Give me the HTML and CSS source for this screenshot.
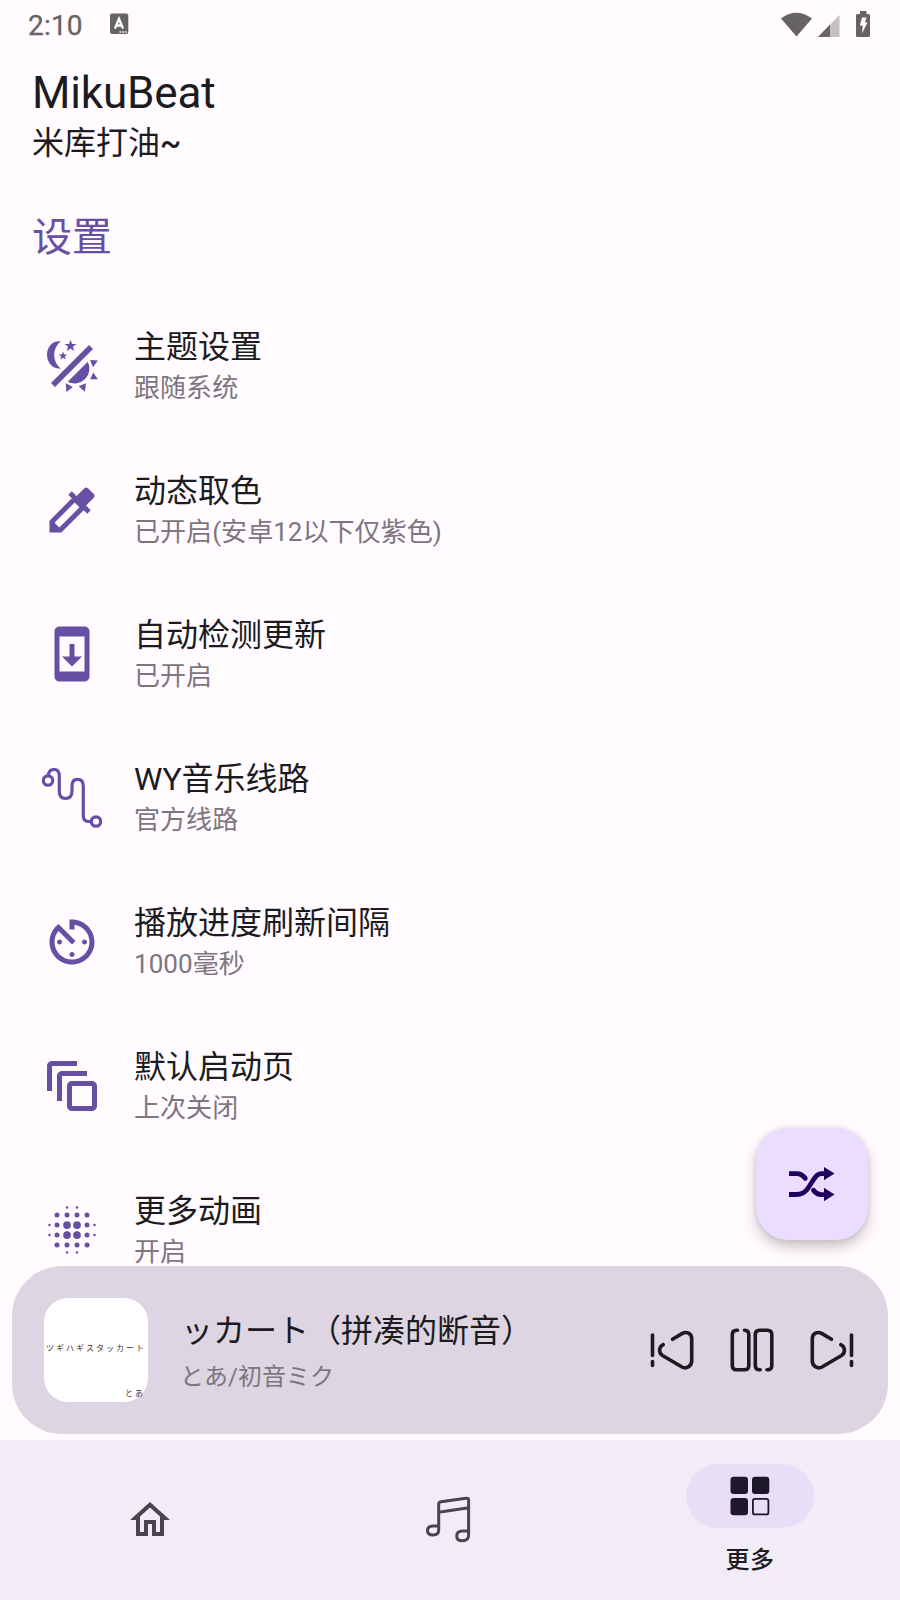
FILE: index.html
```html
<!DOCTYPE html>
<html lang="zh-CN">
<head>
<meta charset="utf-8">
<title>MikuBeat</title>
<link rel="stylesheet" href="styles.css">
</head>
<body>
<div class="app">
  <div class="status">
    <span class="clock">2:10</span>
    <svg class="ime" width="20" height="22" viewBox="109 13 20 22"><rect x="110" y="13.5" width="18.3" height="20.5" rx="2" fill="#656366"/><path d="M115 28.5L119 18.800L123 28.500M116.500 25.500h5" fill="none" stroke="#fff" stroke-width="2.300"/><path d="M119.500 32h7" stroke="#fff" stroke-width="1.500" stroke-dasharray="1.700 1"/></svg>
    <svg class="signals" width="92" height="28" viewBox="780 9 92 28">
      <path d="M781 17.500Q796 6 812 17.500L796.500 35.500z" fill="#656366"/>
      <path d="M839.500 14V36H818z" fill="#c2c0c2"/><path d="M830 23.500V36H818z" fill="#656366"/>
      <path d="M860 10h6.500v3H868.500a1.500 1.500 0 0 1 1.500 1.500V34.500a1.500 1.500 0 0 1-1.500 1.500h-11a1.500 1.500 0 0 1-1.500-1.500v-20a1.500 1.500 0 0 1 1.500-1.500H860z" fill="#656366"/>
      <path d="M862 16.500h4.500l-1.500 5h2.500l-5.500 11 .8-8h-3z" fill="#fff"/>
    </svg>
  </div>
  <header class="header">
    <h1 class="title">MikuBeat</h1>
    <p class="slogan">米库打油<span class="tilde">~</span></p>
  </header>
  <h2 class="section">设置</h2>
  <ul class="list">
    <li class="item">
      <svg class="icon" viewBox="42 336 60 60">
        <path d="M61 341.300C53 340 47 346.500 47 354.500C47 363 53 369.500 61 368.500C52 362 52 348 61 341.300z"/>
        <path d="M70.500 339.700l1.500 4.200h4.500l-3.500 2.700 1.200 4.400-3.700-2.600-3.700 2.600 1.200-4.400-3.500-2.700h4.500zM63 351.400l1.100 3h3.200l-2.500 2 .9 3.200-2.700-1.900-2.700 1.900.9-3.200-2.500-2h3.200z"/>
        <path d="M53 385L91 347" fill="none" stroke="#6750a4" stroke-width="5.600"/>
        <path d="M87.800 361.700A14.900 14.900 0 0 1 67.700 381.800z"/>
        <path d="M90.200 360l7.700.5-5 6.800zM93.200 372.400l4.700 6.800h-7.700zM78.700 386.200l7.200-2.900-1 8.500zM65.800 383.300l7 3.600-6.400 5z"/>
      </svg>
      <div class="label"><span class="name">主题设置</span><span class="value">跟随系统</span></div>
    </li>
    <li class="item">
      <svg class="icon" viewBox="0 0 24 24"><path d="M20.710 5.630l-2.340-2.340c-.39-.39-1.020-.39-1.410 0l-3.120 3.120-1.930-1.910-1.410 1.410 1.420 1.420L3 16.250V21h4.750l8.920-8.920 1.420 1.420 1.410-1.410-1.920-1.920 3.120-3.120c.4-.4.4-1.030.01-1.420zM6.920 19L5 17.080l8.060-8.060 1.920 1.920L6.920 19z"/></svg>
      <div class="label"><span class="name">动态取色</span><span class="value">已开启(安卓12以下仅紫色)</span></div>
    </li>
    <li class="item">
      <svg class="icon" viewBox="0 0 24 24"><path d="M17 1.010L7 1c-1.100 0-2 .9-2 2v18c0 1.100.9 2 2 2h10c1.100 0 2-.9 2-2V3c0-1.100-.9-1.990-2-1.990zM17 19H7V5h10v14zm-1-6h-3V8h-2v5H8l4 4 4-4z"/></svg>
      <div class="label"><span class="name">自动检测更新</span><span class="value">已开启</span></div>
    </li>
    <li class="item">
      <svg class="icon outline" viewBox="42 768 60 60">
        <circle cx="48" cy="780.500" r="4.700"/><circle cx="96" cy="821.500" r="4.700"/>
        <path d="M48 776Q49 769.500 54 769.500Q59.300 769.500 59.300 776V791Q59.300 798.500 65.500 798.500Q72 798.500 72 791V786Q72 779.300 77.500 779.300Q83.300 779.300 83.300 786V816Q83.300 821.500 89 821.500H91.300"/>
      </svg>
      <div class="label"><span class="name">WY音乐线路</span><span class="value">官方线路</span></div>
    </li>
    <li class="item">
      <svg class="icon" viewBox="0 0 24 24"><path d="M11 17c0 .55.45 1 1 1s1-.45 1-1-.45-1-1-1-1 .45-1 1zm0-14v4h2V5.080c3.390.49 6 3.390 6 6.920 0 3.870-3.130 7-7 7s-7-3.130-7-7c0-1.680.59-3.220 1.580-4.420L12 13l1.410-1.410-6.800-6.800v.02C4.420 6.450 3 9.050 3 12c0 4.970 4.020 9 9 9 4.970 0 9-4.030 9-9s-4.030-9-9-9h-1zm7 9c0-.55-.45-1-1-1s-1 .45-1 1 .45 1 1 1 1-.45 1-1zM6 12c0 .55.45 1 1 1s1-.45 1-1-.45-1-1-1-1 .45-1 1z"/></svg>
      <div class="label"><span class="name">播放进度刷新间隔</span><span class="value">1000毫秒</span></div>
    </li>
    <li class="item">
      <svg class="icon" viewBox="0 0 24 24"><path d="M14 2H4c-1.110 0-2 .9-2 2v10h2V4h10V2zm4 4H8c-1.110 0-2 .9-2 2v10h2V8h10V6zm2 4h-8c-1.110 0-2 .9-2 2v8c0 1.100.89 2 2 2h8c1.100 0 2-.9 2-2v-8c0-1.100-.9-2-2-2zm0 10h-8v-8h8v8z"/></svg>
      <div class="label"><span class="name">默认启动页</span><span class="value">上次关闭</span></div>
    </li>
    <li class="item">
      <svg class="icon" viewBox="0 0 24 24">
        <circle cx="10" cy="10" r="1.550"/><circle cx="14" cy="10" r="1.550"/><circle cx="10" cy="14" r="1.550"/><circle cx="14" cy="14" r="1.550"/>
        <circle cx="6" cy="6" r="1"/><circle cx="10" cy="6" r="1"/><circle cx="14" cy="6" r="1"/><circle cx="18" cy="6" r="1"/>
        <circle cx="6" cy="18" r="1"/><circle cx="10" cy="18" r="1"/><circle cx="14" cy="18" r="1"/><circle cx="18" cy="18" r="1"/>
        <circle cx="6" cy="10" r="1"/><circle cx="6" cy="14" r="1"/><circle cx="18" cy="10" r="1"/><circle cx="18" cy="14" r="1"/>
        <circle cx="10" cy="3" r=".5"/><circle cx="14" cy="3" r=".5"/><circle cx="10" cy="21" r=".5"/><circle cx="14" cy="21" r=".5"/>
        <circle cx="3" cy="10" r=".5"/><circle cx="3" cy="14" r=".5"/><circle cx="21" cy="10" r=".5"/><circle cx="21" cy="14" r=".5"/>
      </svg>
      <div class="label"><span class="name">更多动画</span><span class="value">开启</span></div>
    </li>
  </ul>
  <section class="player">
    <div class="cover"><span class="cover-title">ツギハギスタッカート</span><span class="cover-artist">とあ</span></div>
    <div class="track"><span class="song">ッカート（拼凑的断音）</span><span class="artist">とあ/初音ミク</span></div>
    <div class="controls">
      <svg class="control" viewBox="648 1326 48 48"><path d="M652.500 1335V1355.500M652.500 1361.500V1365.500M672.500 1339.300L682 1333.600C686.500 1331 691.700 1333.500 691.700 1338.500V1361C691.700 1366 686.500 1369.500 682 1367L662.500 1355.500C658.500 1353 658.500 1347 663.200 1344.700"/></svg>
      <svg class="control" viewBox="728 1326 48 48"><path d="M737.500 1330.200H736.500Q732.300 1330.200 732.300 1334.500V1365.500Q732.300 1369.800 736.500 1369.800H744.500Q748.800 1369.800 748.800 1365.500V1334.500Q748.800 1330.200 744.500 1330.200M760.200 1369.800H759.500Q755.300 1369.800 755.300 1365.500V1334.500Q755.300 1330.200 759.500 1330.200H767.500Q771.800 1330.200 771.800 1334.500V1365.500Q771.800 1369.800 767.500 1369.800H767"/></svg>
      <svg class="control mirrored" viewBox="648 1326 48 48"><path d="M652.500 1335V1355.500M652.500 1361.500V1365.500M672.500 1339.300L682 1333.600C686.500 1331 691.700 1333.500 691.700 1338.500V1361C691.700 1366 686.500 1369.500 682 1367L662.500 1355.500C658.500 1353 658.500 1347 663.200 1344.700"/></svg>
    </div>
  </section>
  <nav class="nav">
    <a class="tab"><svg width="48" height="48" viewBox="0 0 24 24"><path fill="#49454f" d="M12 5.690l5 4.500V18h-2v-6H9v6H7v-7.810l5-4.500M12 3L2 12h3v8h6v-6h2v6h6v-8h3L12 3z"/></svg></a>
    <a class="tab"><svg width="48" height="48" viewBox="426 1496 48 48"><path fill="none" stroke="#49454f" stroke-width="3" stroke-linejoin="round" d="M438.700 1526H433Q427.500 1526 427.500 1530.500Q427.500 1535 433 1535Q438.700 1535 438.700 1530V1504Q438.700 1502 441 1501.700L466 1498.200Q468.600 1498 468.600 1500V1535Q468.600 1540.800 462.500 1540.800Q456.700 1540.800 456.700 1536Q456.700 1531 462.500 1531H468.600M438.700 1512.300L468.600 1507.800"/></svg></a>
    <a class="tab active">
      <span class="pill"><svg width="48" height="48" viewBox="726 1472 48 48" fill="#1d192b"><rect x="730.500" y="1476.700" width="17.500" height="17.300" rx="3"/><rect x="752" y="1476.700" width="17.300" height="17.300" rx="3"/><rect x="730.500" y="1498" width="17.500" height="17.300" rx="3"/><rect x="752.900" y="1498.900" width="15.500" height="15.500" rx="2" fill="none" stroke="#1d192b" stroke-width="1.800"/></svg></span>
      <span class="tab-label">更多</span>
    </a>
  </nav>
  <button class="fab" aria-label="shuffle">
    <svg width="48" height="48" viewBox="788 1160 48 48"><g fill="none" stroke="#21005d" stroke-width="4.800"><path d="M789 1173.700H797C801 1173.700 803 1175.500 804.500 1177.500"/><path d="M804.500 1177.500L805.300 1178.300" stroke-linecap="round"/><path d="M789 1194.500H796C802 1194.500 805.500 1192.500 808.500 1187.500L813 1180.500C816 1176 817.500 1173.700 822 1173.700H825"/><path d="M825 1194.700H821C817.500 1194.700 815.500 1193 813.500 1190.300" stroke-linecap="round"/></g><path fill="#21005d" d="M824 1167L834.500 1173.600L824 1180.200zM824 1187.800L834.500 1194.500L824 1201.200z"/></svg>
  </button>
</div>
</body>
</html>
```
FILE: styles.css
```css
* { box-sizing: border-box; margin: 0; padding: 0; }

body {
  background: #fffbfe;
  color: #1c1b1f;
  font-family: Roboto, "Noto Sans CJK SC", sans-serif;
}

.app {
  position: relative;
  display: flex;
  flex-direction: column;
  width: 900px;
  height: 1600px;
  overflow: hidden;
}

svg { display: block; flex: none; }

.status {
  display: flex;
  align-items: center;
  height: 48px;
  padding: 0 28px;
  color: #656366;
}
.clock { width: 81px; font-size: 28px; line-height: 48px; padding-top: 3px; letter-spacing: .2px; -webkit-text-stroke: .3px; }
.signals { margin-left: auto; }

.header { padding: 19px 32px 0; height: 140px; }
.title { font-size: 44px; font-weight: 400; line-height: 52px; letter-spacing: -.15px; }
.slogan { padding-top: 1px; font-size: 32px; line-height: 46px; }
.tilde { font-weight: 500; }

.section {
  height: 106px;
  padding: 21px 32px 0;
  color: #6750a4;
  font-size: 40px;
  font-weight: 400;
  line-height: 58px;
}

.list { flex: 1; min-height: 0; overflow: hidden; list-style: none; }
.item { display: flex; align-items: center; height: 144px; padding: 0 42px; gap: 32px; }
.icon { width: 60px; height: 60px; fill: #6750a4; }
.outline { fill: none; stroke: #6750a4; stroke-width: 3.2; }
.label { display: flex; flex-direction: column; }
.name { font-size: 32px; line-height: 42px; white-space: nowrap; }
.value { color: #7b767f; font-size: 26px; line-height: 38px; white-space: nowrap; padding-top: 1px; margin-bottom: -1px; letter-spacing: .05px; }

.player {
  display: flex;
  align-items: center;
  flex: none;
  height: 168px;
  margin: 0 12px 6px;
  padding: 0 32px;
  border-radius: 50px;
  background: #ddd5e1;
}
.cover {
  display: flex;
  flex-direction: column;
  align-items: flex-end;
  justify-content: space-between;
  width: 104px;
  height: 104px;
  padding: 43px 3px 2px 3px;
  border-radius: 24px;
  background: #fff;
  color: #56302b;
  font-family: "Noto Sans CJK JP", sans-serif;
  white-space: nowrap;
}
.cover-title { font-size: 8px; line-height: 14px; letter-spacing: 2px; margin-right: -1px; }
.cover-artist { font-size: 8px; line-height: 14px; letter-spacing: 2px; }
.track {
  display: flex;
  flex-direction: column;
  flex: 1;
  padding: 7px 0 0 32px;
  font-family: Roboto, "Noto Sans CJK JP", "Noto Sans CJK SC", sans-serif;
}
.song { padding-left: 1px; font-size: 32px; line-height: 46px; white-space: nowrap; font-family: Roboto, "Noto Sans CJK SC", sans-serif; }
.artist { color: #7b767f; font-size: 24px; line-height: 46px; }
.controls { display: flex; gap: 32px; }
.control {
  width: 48px;
  height: 48px;
  fill: none;
  stroke: #1c1b1f;
  stroke-width: 3.6;
  stroke-linecap: round;
}
.mirrored { transform: scaleX(-1); }

.nav { display: flex; flex: none; height: 160px; background: #f2ecf6; }
.tab { display: flex; flex: 1; flex-direction: column; align-items: center; justify-content: center; }
.active { justify-content: flex-start; padding-top: 24px; }
.pill {
  display: flex;
  align-items: center;
  justify-content: center;
  width: 128px;
  height: 64px;
  border-radius: 32px;
  background: #e8def8;
}
.tab-label { margin-top: 15px; font-size: 24px; font-weight: 500; line-height: 34px; letter-spacing: .5px; }

/* Floats over the list, above the player bar */
.fab {
  position: absolute;
  right: 32px;
  bottom: 360px;
  display: flex;
  align-items: center;
  justify-content: center;
  width: 112px;
  height: 112px;
  border: 0;
  border-radius: 32px;
  background: #eaddff;
  box-shadow: 0 7px 14px rgba(0, 0, 0, .22), 0 0 5px rgba(0, 0, 0, .1);
}
```
